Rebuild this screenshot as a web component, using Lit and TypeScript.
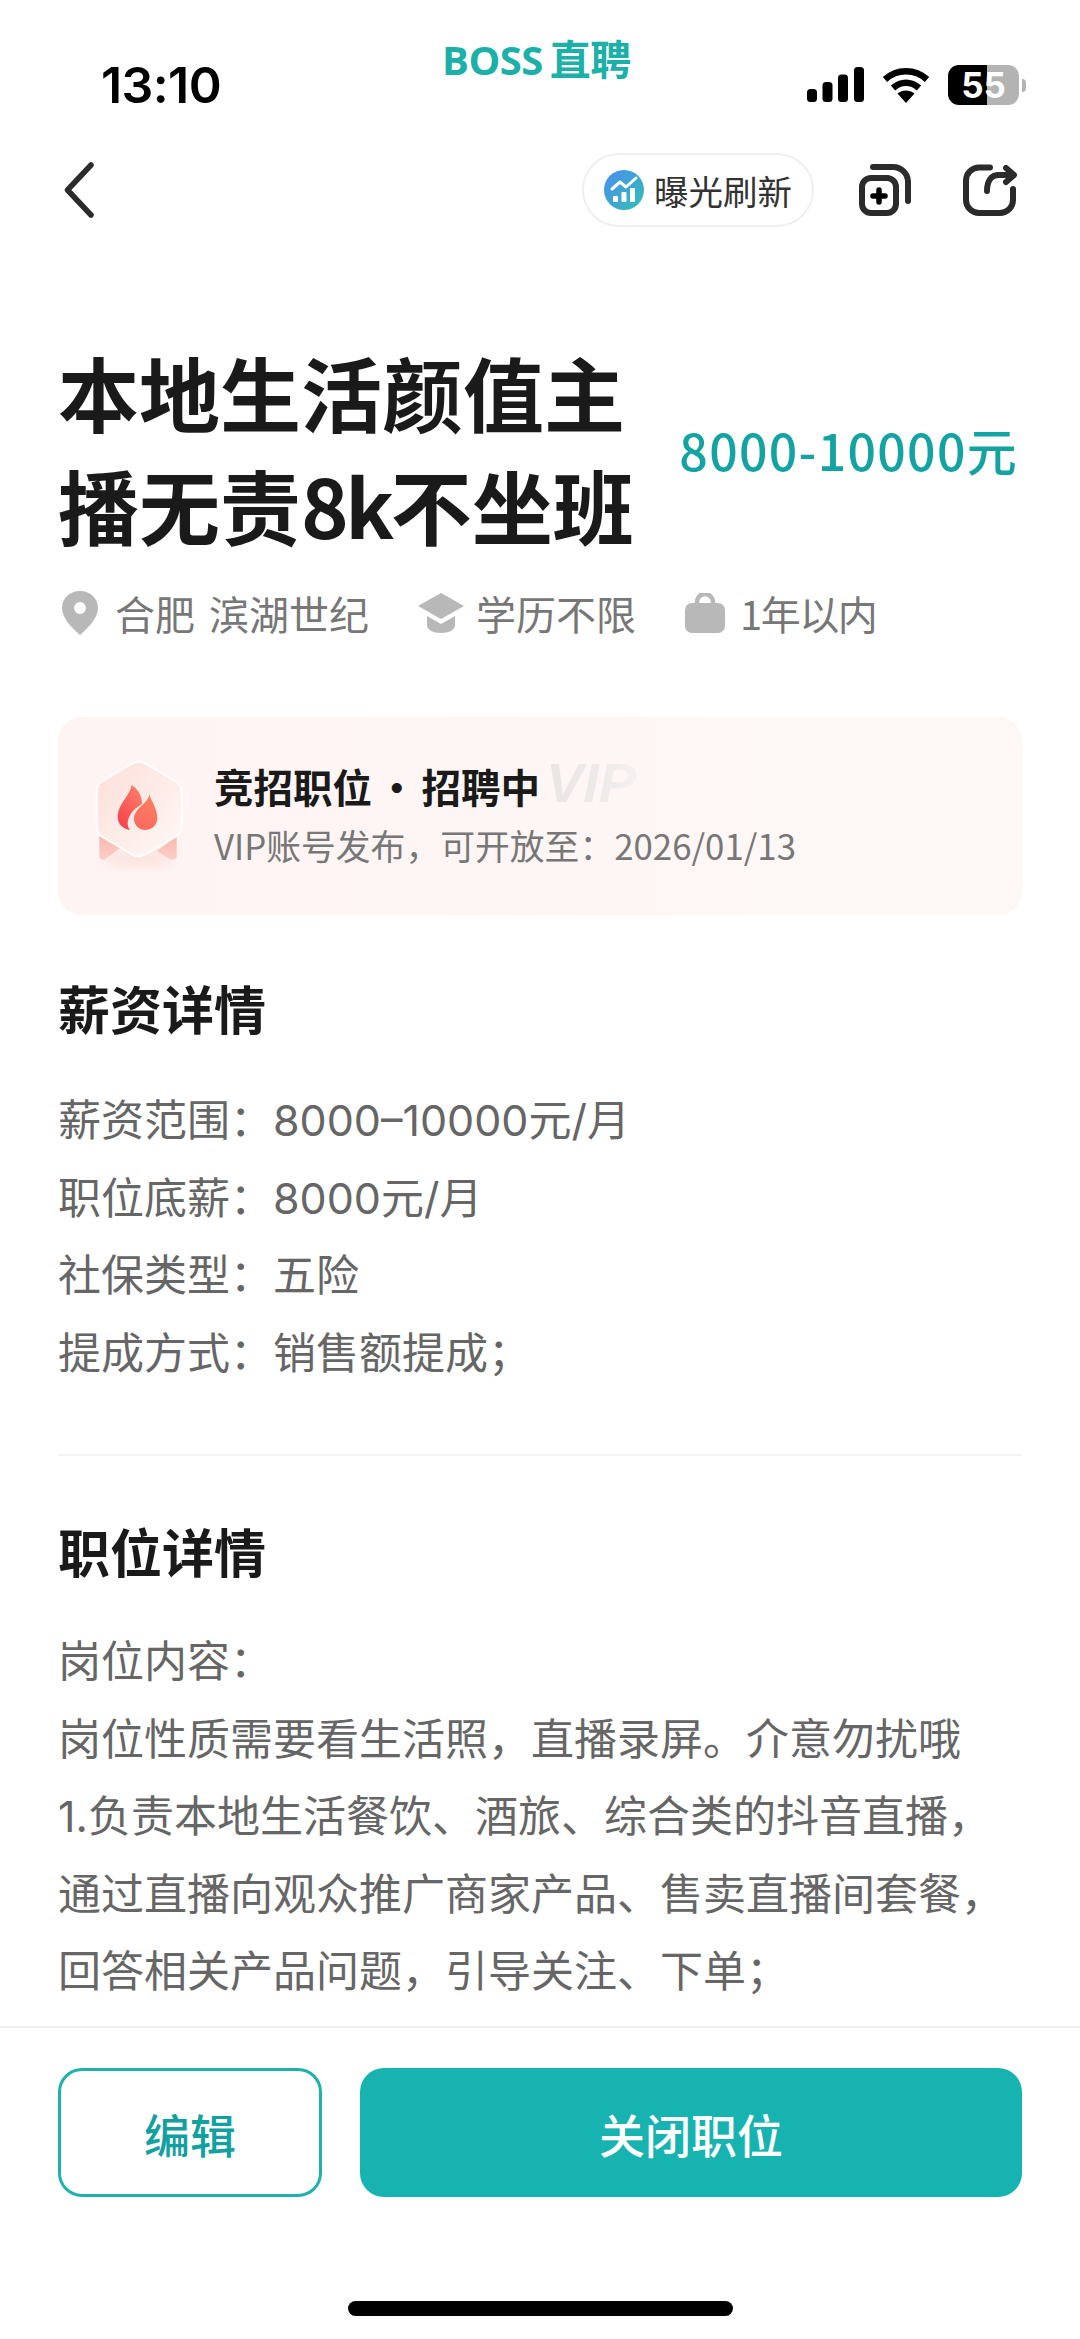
import { LitElement, html, css } from "lit";
import { customElement } from "lit/decorators.js";

@customElement("app-root")
export class AppRoot extends LitElement {
  static styles = css`
    :host {
      display: flex;
      flex-direction: column;
      width: 1080px;
      height: 2339px;
      overflow: hidden;
      background: #fff;
      font-family: "Noto Sans CJK SC", "Noto Sans", sans-serif;
      color: #1a1a1a;
    }
    svg { display: block; flex: none; }
    .status {
      flex: none;
      height: 125px;
      padding: 0 54px 0 101px;
      box-sizing: border-box;
      display: grid;
      grid-template-columns: 341px 195px 1fr;
      position: relative;
    }
    .time {
      font-family: Inter, sans-serif;
      font-weight: 600;
      font-size: 50px;
      line-height: 50px;
      letter-spacing: -0.6px;
      margin-top: 60px;
      color: #000;
    }
    .logo {
      font-family: "Open Sans", sans-serif;
      font-weight: 700;
      font-size: 40px;
      line-height: 40px;
      margin-top: 37px;
      color: #1bb0a8;
      white-space: nowrap;
      letter-spacing: -0.5px;
    }
    .logo span { font-family: "Noto Sans CJK SC", sans-serif; font-size: 41px; font-weight: 700; margin-left: -3px; }
    .sys {
      display: flex;
      justify-content: flex-end;
      align-items: flex-start;
      margin-top: 65px;
      gap: 18px;
    }
    .signal { margin-top: 2px; }
    .wifi { margin-top: 2px; }
    .batt {
      position: relative;
      width: 71px;
      height: 40px;
      border-radius: 11px;
      overflow: hidden;
      background: linear-gradient(90deg, #000 0 39px, #b3b3b3 39px);
      color: #fff;
      font-family: Inter, sans-serif;
      font-weight: 700;
      font-size: 35px;
      line-height: 40px;
      text-align: center;
      letter-spacing: 0;
    }
    .battwrap { display: flex; align-items: center; gap: 3px; }
    .nub { width: 4px; height: 13px; background: #b3b3b3; border-radius: 0 4px 4px 0; }

    .nav {
      flex: none;
      height: 74px;
      margin-top: 28px;
      padding: 0 65px 0 64px;
      display: flex;
      align-items: center;
    }
    .pill {
      margin-left: auto;
      width: 232px;
      height: 74px;
      box-sizing: border-box;
      border: 2px solid #efefef;
      border-radius: 37px;
      display: flex;
      align-items: center;
      padding-left: 20px;
      gap: 10px;
      font-size: 34.5px;
      color: #333;
      white-space: nowrap;
    }
    .copy { margin-left: 45px; }
    .share { margin-left: 52px; margin-right: -2px; }

    .scroll {
      flex: 1;
      min-height: 0;
      overflow: hidden;
      padding: 0 58px 0 58px;
    }
    .head {
      display: flex;
      align-items: center;
      justify-content: space-between;
      margin-top: 107px;
      padding-right: 4px;
    }
    h1 {
      margin: 0;
      font-size: 81px;
      font-weight: 700;
      line-height: 113px;
      color: #1a1a1a;
    }
    h1 .latin { letter-spacing: -3.5px; }
    .pay {
      font-size: 50px;
      font-weight: 500;
      line-height: 60px;
      letter-spacing: 1.3px;
      color: #14a3a3;
      white-space: nowrap;
      margin-top: 3px;
    }
    .meta {
      display: flex;
      align-items: center;
      margin-top: 31px;
      height: 44px;
      padding-left: 2px;
      font-size: 40px;
      color: #777;
      white-space: nowrap;
      word-spacing: 5px;
    }
    .meta .item { display: flex; align-items: center; gap: 15px; margin-right: 49px; }
    .meta .item.cap { gap: 12px; }
    .yr { letter-spacing: -1.5px; }
    .vip {
      margin-top: 82px;
      height: 198px;
      border-radius: 24px;
      background: linear-gradient(90deg, #fef4f3, #fdf8f6);
      display: flex;
      align-items: center;
      padding-left: 34px;
      gap: 26px;
    }
    .vip-text { margin-top: -6px; }
    .vip-title {
      font-size: 39.5px;
      font-weight: 700;
      line-height: 50px;
      color: #1a1a1a;
      display: flex;
      align-items: center;
      white-space: pre;
      word-spacing: -4px;
    }
    .ghost {
      font-family: "Liberation Sans", sans-serif;
      font-style: italic;
      font-weight: 700;
      font-size: 56px;
      line-height: 50px;
      margin-left: 6px;
      margin-bottom: 6px;
      background: linear-gradient(90deg, #ebe6e6, #efeaea 60%, #f6f1f0);
      -webkit-background-clip: text;
      background-clip: text;
      color: transparent;
    }
    .vip-sub {
      font-size: 34.8px;
      line-height: 46px;
      margin-top: 8px;
      color: #777;
      white-space: nowrap;
    }
    h2 {
      margin: 0;
      font-size: 52px;
      font-weight: 700;
      line-height: 70px;
      color: #1a1a1a;
    }
    .s1 { margin-top: 58px; }
    .lines {
      margin-top: 39px;
      font-family: Inter, "Noto Sans CJK SC", sans-serif;
      font-size: 43px;
      line-height: 77.6px;
      color: #666;
      white-space: nowrap;
    }
    .rule { height: 2px; background: #f3f3f3; margin-top: 62px; }
    .s2 { margin-top: 60px; }
    .lines.two { margin-top: 37px; line-height: 77.5px; }

    .foot {
      flex: none;
      height: 313px;
      box-sizing: border-box;
      border-top: 2px solid #f0f0f0;
      background: #fff;
      position: relative;
      padding: 40px 58px 0;
    }
    .btns { display: flex; gap: 38px; }
    .btn {
      box-sizing: border-box;
      height: 129px;
      border-radius: 24px;
      display: flex;
      align-items: center;
      justify-content: center;
      font-size: 46px;
      font-weight: 500;
    }
    .edit { width: 264px; border: 3px solid #1fb1ad; color: #12a0a0; }
    .close { flex: 1; background: #17b3b0; color: #fff; }
    .home {
      width: 385px;
      height: 15px;
      border-radius: 8px;
      background: #000;
      margin: 104px auto 0;
    }
  `;

  render() {
    return html`
      <div class="status">
        <div class="time">13:10</div>
        <div class="logo">BOSS <span>直聘</span></div>
        <div class="sys">
          <svg class="signal" width="57" height="35" viewBox="0 0 57 35" fill="#000">
            <rect x="0" y="22" width="10" height="13" rx="3.5"/>
            <rect x="15.5" y="15" width="10" height="20" rx="3.5"/>
            <rect x="31" y="7.5" width="10" height="27.5" rx="3.5"/>
            <rect x="47" y="0" width="10" height="35" rx="3.5"/>
          </svg>
          <svg class="wifi" width="48" height="36" viewBox="0 0 48 36" fill="none" stroke="#000" stroke-width="6.5">
            <path d="M3 12.5C15 1.5 33 1.5 45 12.5"/>
            <path d="M11 21c8-7 18-7 26 0"/>
            <path d="M15.5 26.5c5-4 12-4 17 0L24 36z" fill="#000" stroke="none"/>
          </svg>
          <div class="battwrap">
            <div class="batt">55</div>
            <div class="nub"></div>
          </div>
        </div>
      </div>

      <div class="nav">
        <svg width="30" height="56" viewBox="0 0 30 56" fill="none" stroke="#2b2b2b" stroke-width="5.5" stroke-linecap="round" stroke-linejoin="round">
          <path d="M27 3L3.500 28L27 53"/>
        </svg>
        <div class="pill">
          <svg width="40" height="40" viewBox="0 0 40 40">
            <defs>
              <linearGradient id="g" x1="0" y1="0" x2="1" y2="1">
                <stop offset="0" stop-color="#4a8cf0"/>
                <stop offset="1" stop-color="#33c0b4"/>
              </linearGradient>
            </defs>
            <circle cx="20" cy="20" r="20" fill="url(#g)"/>
            <path d="M8 19l8-7 6 5 10-9" fill="none" stroke="#fff" stroke-width="3" stroke-linecap="round" stroke-linejoin="round"/>
            <rect x="9" y="26" width="5" height="6" rx="1" fill="#fff"/>
            <rect x="17.500" y="22" width="5" height="10" rx="1" fill="#fff"/>
            <rect x="26" y="18" width="5" height="14" rx="1" fill="#fff"/>
          </svg>
          <span>曝光刷新</span>
        </div>
        <svg class="copy" width="52" height="52" viewBox="0 0 52 52" fill="none" stroke="#2b2b2b" stroke-width="6" stroke-linecap="round">
          <path d="M14 3H34a15 15 0 0 1 15 15V37"/>
          <rect x="3" y="14" width="34" height="35" rx="9"/>
          <path d="M14 32H26M20 26V38" stroke="#000" stroke-width="5.500"/>
        </svg>
        <svg class="share" width="54" height="52" viewBox="0 0 54 52" fill="none" stroke="#2b2b2b" stroke-width="6" stroke-linecap="round" stroke-linejoin="round">
          <path d="M27 3.500H16a13 13 0 0 0-13 13V36a13 13 0 0 0 13 13H37a13 13 0 0 0 13-13V25"/>
          <path d="M24 27c0-10 4-16 12-16H50"/>
          <path d="M43 4l8 7-8 7"/>
        </svg>
      </div>

      <div class="scroll">
        <div class="head">
          <h1>本地生活颜值主<br />播无责<span class="latin">8k</span>不坐班</h1>
          <div class="pay">8000-10000元</div>
        </div>
        <div class="meta">
          <div class="item">
            <svg width="40" height="44" viewBox="0 0 40 44">
              <path fill-rule="evenodd" fill="#b8b8b8" d="M20 0C9 0 2 8 2 17c0 10 10 20 18 27 8-7 18-17 18-27C38 8 31 0 20 0zm0 11a6 6 0 1 1 0 12 6 6 0 0 1 0-12z"/>
            </svg>
            <span>合肥 滨湖世纪</span>
          </div>
          <div class="item cap">
            <svg width="46" height="40" viewBox="0 0 46 40" fill="#b8b8b8">
              <path d="M23 0L46 13 23 26 0 13z"/>
              <path d="M9 23l14 8 14-8v9c0 5-6 8-14 8S9 37 9 32z"/>
            </svg>
            <span>学历不限</span>
          </div>
          <div class="item">
            <svg width="40" height="40" viewBox="0 0 40 40">
              <path d="M12 12V9a8 8 0 0 1 16 0v3" fill="none" stroke="#b8b8b8" stroke-width="4.500"/>
              <rect x="0" y="10" width="40" height="30" rx="7" fill="#b8b8b8"/>
            </svg>
            <span class="yr">1年以内</span>
          </div>
        </div>

        <div class="vip">
          <svg width="96" height="112" viewBox="0 0 96 112">
            <defs>
              <linearGradient id="hex" x1="0" y1="0" x2="1" y2="1">
                <stop offset="0" stop-color="#fcdfd9"/>
                <stop offset="1" stop-color="#fff8f6"/>
              </linearGradient>
              <linearGradient id="f1" x1="0.800" y1="0" x2="0.200" y2="1">
                <stop offset="0" stop-color="#fb7f68"/>
                <stop offset="1" stop-color="#f7404b"/>
              </linearGradient>
              <linearGradient id="f2" x1="0.700" y1="0" x2="0.300" y2="1">
                <stop offset="0" stop-color="#fd7f62"/>
                <stop offset="1" stop-color="#fb6a60"/>
              </linearGradient>
              <linearGradient id="rib" x1="0" y1="0" x2="0" y2="1">
                <stop offset="0" stop-color="#fcb8ac"/>
                <stop offset="1" stop-color="#fccfc7"/>
              </linearGradient>
              <filter id="blur" x="-30%" y="-30%" width="160%" height="160%"><feGaussianBlur stdDeviation="6"/></filter>
            </defs>
            <ellipse cx="47" cy="98" rx="36" ry="9" fill="#fadcd6" opacity=".7" filter="url(#blur)"/>
            <path d="M7.300 76V96c0 3 3 4.500 5.700 3.300L28 88z" fill="url(#rib)"/>
            <path d="M84.700 76V96.500c0 2.500-3.500 4-6.700 2.800L64.700 91z" fill="url(#rib)"/>
            <path d="M40 3.500a13 13 0 0 1 13 0L82.500 20.500c4.500 2.500 7.200 6 7.200 11V66.500c0 5-2.700 8.500-7.200 11L53 94.500a13 13 0 0 1-13 0L11.500 77.500c-4.500-2.500-6.800-6-6.800-11V31.500c0-5 2.300-8.500 6.800-11z" fill="url(#hex)" stroke="#fff" stroke-width="2"/>
            <path d="M39.700 25C38 36 25.700 44 25.700 56.700C25.700 64 31 69 38 70C33 64 36 52 50 44C50 36 46 29 39.700 25z" fill="url(#f1)"/>
            <path d="M57.300 34.300C56 44 42 48 42 59C42 65 47 70 53 70C60 70 65.300 65 65.300 58C65.300 48 59 41 57.300 34.300z" fill="url(#f2)"/>
          </svg>
          <div class="vip-text">
            <div class="vip-title">竞招职位 · 招聘中<span class="ghost">VIP</span></div>
            <div class="vip-sub">VIP账号发布，可开放至：2026/01/13</div>
          </div>
        </div>

        <h2 class="s1">薪资详情</h2>
        <div class="lines">
          <div>薪资范围：8000–10000元/月</div>
          <div>职位底薪：8000元/月</div>
          <div>社保类型：五险</div>
          <div>提成方式：销售额提成；</div>
        </div>
        <div class="rule"></div>
        <h2 class="s2">职位详情</h2>
        <div class="lines two">
          <div>岗位内容：</div>
          <div>岗位性质需要看生活照，直播录屏。介意勿扰哦</div>
          <div>1.负责本地生活餐饮、酒旅、综合类的抖音直播，</div>
          <div>通过直播向观众推广商家产品、售卖直播间套餐，</div>
          <div>回答相关产品问题，引导关注、下单；</div>
        </div>
      </div>

      <div class="foot">
        <div class="btns">
          <div class="btn edit">编辑</div>
          <div class="btn close">关闭职位</div>
        </div>
        <div class="home"></div>
      </div>
    `;
  }
}
